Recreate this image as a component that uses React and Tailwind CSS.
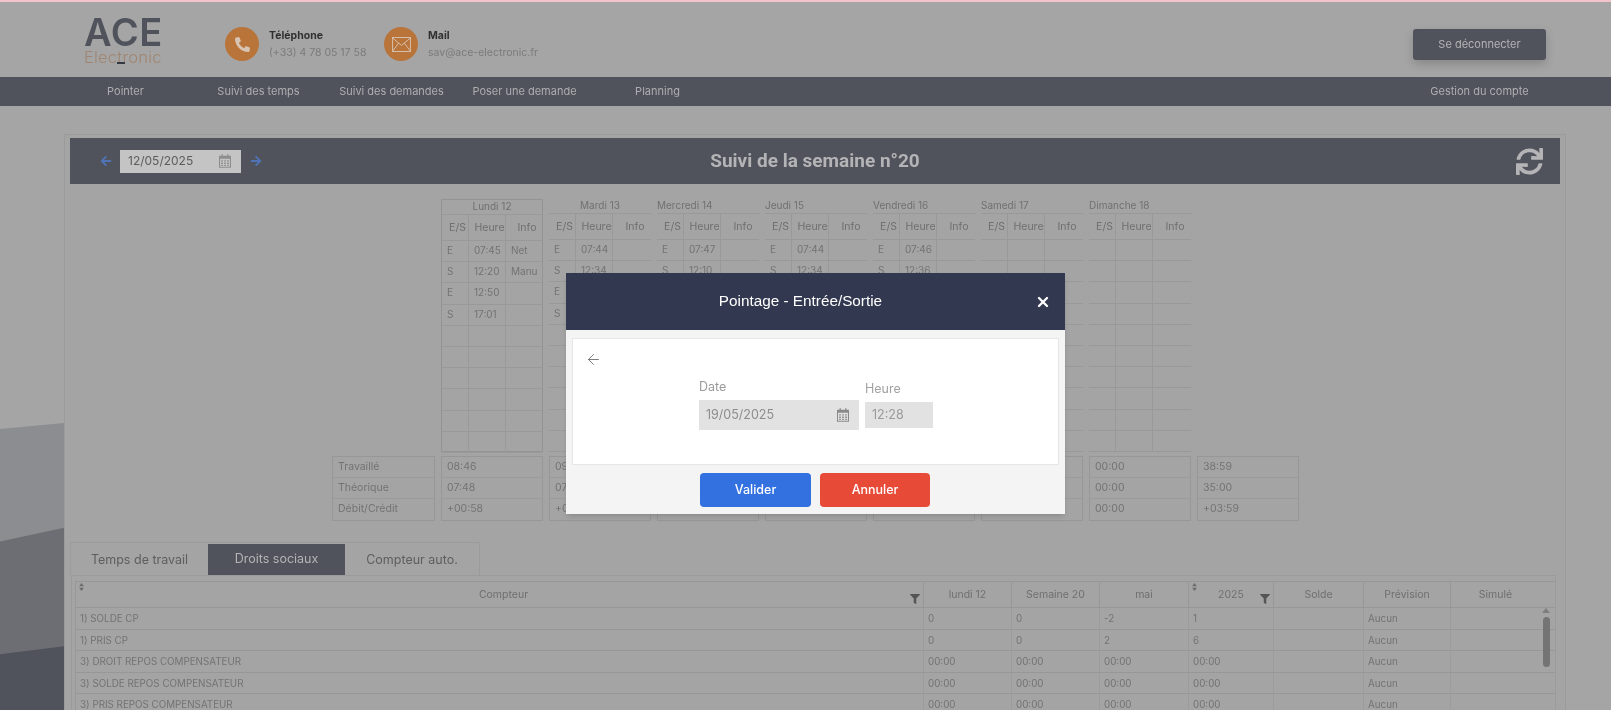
import React from "react";
import { ArrowLeft, X } from "lucide-react";
import { FaArrowLeft, FaArrowRight, FaFilter, FaPhoneAlt, FaSync } from "react-icons/fa";

const days = [
  {
    title: "Lundi 12",
    titleClass: "text-center",
    boxClass: "border border-[#949494]",
    rows: [["E", "07:45", "Net"], ["S", "12:20", "Manu"], ["E", "12:50", ""], ["S", "17:01", ""]],
    totals: ["08:46", "07:48", "+00:58"],
  },
  {
    title: "Mardi 13",
    titleClass: "text-center",
    rows: [["E", "07:44", ""], ["S", "12:34", ""], ["E", "", ""], ["S", "", ""]],
    totals: ["09:01", "07:48", "+01:13"],
  },
  {
    title: "Mercredi 14",
    rows: [["E", "07:47", ""], ["S", "12:10", ""]],
    totals: ["", "", ""],
  },
  {
    title: "Jeudi 15",
    rows: [["E", "07:44", ""], ["S", "12:34", ""]],
    totals: ["", "", ""],
  },
  {
    title: "Vendredi 16",
    rows: [["E", "07:46", ""], ["S", "12:36", ""]],
    totals: ["", "", ""],
  },
  { title: "Samedi 17", rows: [], totals: ["", "", ""] },
  { title: "Dimanche 18", rows: [], totals: ["00:00", "00:00", "00:00"] },
];

const counters = [
  ["1) SOLDE CP", "0", "0", "-2", "1", "", "Aucun", ""],
  ["1) PRIS CP", "0", "0", "2", "6", "", "Aucun", ""],
  ["3) DROIT REPOS COMPENSATEUR", "00:00", "00:00", "00:00", "00:00", "", "Aucun", ""],
  ["3) SOLDE REPOS COMPENSATEUR", "00:00", "00:00", "00:00", "00:00", "", "Aucun", ""],
  ["3) PRIS REPOS COMPENSATEUR", "00:00", "00:00", "00:00", "00:00", "", "Aucun", ""],
];

const CalendarIcon = ({ className }) => (
  <svg viewBox="0 0 14 16" className={className} fill="currentColor">
    <path d="M3 0h1.500v2h5V0H11v2h3v14H0V2h3zM1.200 5.500v9.300h11.600V5.500z" />
    <path d="M2.500 7h2v1.600h-2zM6 7h2v1.600H6zM9.500 7h2v1.600h-2zM2.500 9.800h2v1.600h-2zM6 9.800h2v1.600H6zM9.500 9.800h2v1.600h-2zM2.500 12.500h2v1.300h-2zM6 12.500h2v1.300H6zM9.500 12.500h2v1.300h-2z" />
  </svg>
);

const EnvelopeIcon = () => (
  <svg viewBox="0 0 20 16" className="w-[19px] h-[15px] text-[#d8c4b2]" fill="none" stroke="currentColor" strokeWidth="1">
    <rect x="0.500" y="0.500" width="19" height="15" />
    <path d="M0.500 1l9.500 8 9.500-8M0.500 15l6.500-8.500M19.500 15L13 6.500" />
  </svg>
);

const SortIcon = () => (
  <svg viewBox="0 0 6 10" className="w-[5px] h-[8px] text-[#6b6b6b]" fill="currentColor">
    <path d="M3 0l3 4H0zM3 10L0 6h6z" />
  </svg>
);

const DayTable = ({ day }) => {
  const rows = Array.from({ length: 10 }, (_, i) => day.rows[i] || ["", "", ""]);
  return (
    <div className={`h-[253px] ${day.boxClass || ""}`}>
      <div className={`h-[14px] leading-[13px] text-[10px] text-[#707070] whitespace-nowrap ${day.titleClass || ""}`}>
        {day.title}
      </div>
      <div className="grid grid-cols-[27px_37px_1fr] h-[27px] border-y border-[#999999] text-[10.500px] text-[#6f6f6f] items-center text-center">
        <span className="h-full pl-[5px] leading-[25px] border-r border-[#999999]">E/S</span>
        <span className="h-full pl-[5px] leading-[25px] border-r border-[#999999] overflow-hidden">Heure</span>
        <span className="pl-[6px]">Info</span>
      </div>
      {rows.map((row, i) => (
        <div key={i} className="grid grid-cols-[27px_37px_1fr] h-[21.200px] border-b border-[#999999] text-[10px] leading-[19px] text-[#737373]">
          <span className="pl-[5px] border-r border-[#999999]">{row[0]}</span>
          <span className="pl-[5px] border-r border-[#999999]">{row[1]}</span>
          <span className="pl-[5px]">{row[2]}</span>
        </div>
      ))}
    </div>
  );
};

const TotalBox = ({ values }) => (
  <div className="border border-[#979797] h-[65px]">
    {values.map((value, i) => (
      <div key={i} className="h-[21px] pl-[5px] text-[10.500px] leading-[20px] text-[#737373] border-b border-[#9b9b9b] last:border-b-0">
        {value}
      </div>
    ))}
  </div>
);

const PointageModal = () => (
  <div className="absolute left-[566px] top-[271px] w-[499px] h-[241px] bg-[#f4f4f4] shadow-md">
    <div className="h-[57px] bg-[#32384f] flex items-center justify-center relative pr-[30px]">
      <span className="text-[15.300px] text-white font-['Liberation_Sans',Arial,sans-serif]">Pointage - Entrée/Sortie</span>
      <X size={16} strokeWidth={3.5} className="absolute right-[14px] top-[21px] text-white" />
    </div>
    <div className="mx-[6px] mt-[8px] h-[127px] bg-white border border-[#e6e6e6] relative">
      <ArrowLeft size={17} strokeWidth={1.2} className="absolute left-[12px] top-[12px] text-[#666666]" />
      <div className="flex gap-[6px] pl-[126px] pt-[40px] items-end">
        <div>
          <div className="text-[12.500px] leading-[16px] text-[#9a9a9a] mb-[5px]">Date</div>
          <div className="w-[160px] h-[30px] bg-[#e2e2e2] flex items-center justify-between pl-[7px] pr-[10px] text-[12.500px] text-[#8d8d8d]">
            19/05/2025
            <CalendarIcon className="w-[12px] h-[14px] text-[#8a8a8a]" />
          </div>
        </div>
        <div className="pb-[2px]">
          <div className="text-[12.500px] leading-[16px] text-[#a3a3a3] mb-[5px]">Heure</div>
          <div className="w-[68px] h-[26px] bg-[#e2e2e2] leading-[26px] pl-[7px] text-[12.500px] text-[#9a9a9a]">12:28</div>
        </div>
      </div>
    </div>
    <div className="flex gap-[9px] pl-[134px] pt-[8px]">
      <button className="w-[111px] h-[34px] rounded-[4px] bg-[#3370e0] text-white text-[12.500px] font-medium">Valider</button>
      <button className="w-[110px] h-[34px] rounded-[4px] bg-[#e84a38] text-white text-[12.500px] font-medium">Annuler</button>
    </div>
  </div>
);

export default function App() {
  return (
    <div className="relative h-[710px] overflow-hidden bg-[#a5a5a5] font-['Inter','Noto_Sans',sans-serif] border-t-2 border-[#f3c4cc] blur-[0.5px]">
      {/* Vagues du fond, à gauche */}
      <svg viewBox="0 0 64 290" preserveAspectRatio="none" className="absolute left-0 top-[421px] w-[64px] h-[289px]">
        <path d="M0 6L64 0V290H0z" fill="#8c8d90" />
        <path d="M0 119L64 105V290H0z" fill="#6c6e73" />
        <path d="M0 232L64 224V290H0z" fill="#50535c" />
      </svg>

      {/* En-tête */}
      <header className="h-[75px] flex items-center pt-[9px] pl-[84px] pr-[65px]">
        <div className="w-[78px] relative -mt-[8px]">
          <div className="text-[38px] leading-[30px] font-semibold tracking-[0.5px] text-[#50535c]">ACE</div>
          <div className="mt-[3px] text-[16.500px] leading-[14px] font-light tracking-[0.2px] text-[#a08672] whitespace-nowrap">Electronic</div>
          <span className="absolute left-[33px] top-[45px] w-[8px] h-[2px] bg-[#333842]" />
        </div>
        <div className="ml-[63px] w-[34px] h-[34px] rounded-full bg-[#b9743a] flex items-center justify-center">
          <FaPhoneAlt size={15} className="text-[#d8c4b2]" />
        </div>
        <div className="ml-[10px] w-[115px] whitespace-nowrap">
          <div className="text-[10.500px] leading-[14px] font-bold text-[#303030]">Téléphone</div>
          <div className="mt-[3px] text-[10.500px] leading-[14px] text-[#7b7b7b]">(+33) 4 78 05 17 58</div>
        </div>
        <div className="w-[34px] h-[34px] rounded-full bg-[#b9743a] flex items-center justify-center">
          <EnvelopeIcon />
        </div>
        <div className="ml-[10px] whitespace-nowrap">
          <div className="text-[10.500px] leading-[14px] font-bold text-[#303030]">Mail</div>
          <div className="mt-[3px] text-[10.500px] leading-[14px] text-[#7b7b7b]">sav@ace-electronic.fr</div>
        </div>
        <button className="ml-auto w-[133px] h-[31px] rounded-[3px] bg-[#50535c] text-[11px] text-[#b4b4b6] shadow-[0_4px_10px_rgba(0,0,0,0.18)]">
          Se déconnecter
        </button>
      </header>

      {/* Navigation */}
      <nav className="h-[29px] bg-[#50535c] flex items-center pl-[59px] pr-[65px] text-[11px] text-[#aeaeb0]">
        {["Pointer", "Suivi des temps", "Suivi des demandes", "Poser une demande", "Planning"].map((item) => (
          <span key={item} className="w-[133px] text-center whitespace-nowrap">{item}</span>
        ))}
        <span className="ml-auto w-[133px] text-center whitespace-nowrap">Gestion du compte</span>
      </nav>

      {/* Panneau principal */}
      <main className="relative ml-[64px] mt-[28px] w-[1502px] h-[600px] border border-[#9b9b9b] bg-[#a4a4a4] px-[5px] pt-[3px]">
        <div className="h-[46px] w-[1490px] bg-[#50535c] flex items-center relative">
          <FaArrowLeft size={12} className="ml-[30px] text-[#4f73b5]" />
          <div className="ml-[8px] w-[121px] h-[23px] bg-[#c4c4c4] flex items-center justify-between pl-[8px] pr-[10px] text-[12px] text-[#5c5c5c]">
            12/05/2025
            <CalendarIcon className="w-[12px] h-[14px] text-[#8e8e8e]" />
          </div>
          <FaArrowRight size={12} className="ml-[9px] text-[#4f73b5]" />
          <h1 className="absolute left-0 right-0 text-center text-[19px] font-bold font-['Roboto',sans-serif] text-[#b4b4b6]">Suivi de la semaine n°20</h1>
          <FaSync size={27} className="ml-auto mr-[17px] text-[#b4b4b6]" />
        </div>

        {/* Semaine */}
        <div className="ml-[262px] mt-[15px] grid grid-cols-[103px_repeat(8,102px)] gap-x-[6px]">
          <div />
          {days.map((day) => (
            <DayTable key={day.title} day={day} />
          ))}
          <div />
          <div className="col-span-9 h-[4px]" />
          <TotalBox values={["Travaillé", "Théorique", "Débit/Crédit"]} />
          {days.map((day) => (
            <TotalBox key={day.title} values={day.totals} />
          ))}
          <TotalBox values={["38:59", "35:00", "+03:59"]} />
        </div>

        {/* Onglets */}
        <div className="mt-[21px] w-[410px] h-[33px] flex items-stretch border border-[#9b9b9b] border-b-0 text-[12.500px] text-[#5e5e5e] text-center">
          <div className="w-[137px] leading-[33px]">Temps de travail</div>
          <div className="w-[137px] mt-[1px] leading-[30px] bg-[#50535c] text-[#b4b4b6]">Droits sociaux</div>
          <div className="flex-1 leading-[33px]">Compteur auto.</div>
        </div>

        {/* Compteurs */}
        <div className="relative w-[1485px] ml-[1px] border border-[#9b9b9b] pl-[3px] pt-[5px]">
          <div className="grid grid-cols-[848px_88px_88px_89px_85px_90px_87px_89px] h-[27px] border-y border-l border-[#979797] text-[10.500px] leading-[25px] text-[#6f6f6f] text-center">
            <div className="relative pl-[8px] border-r border-[#979797]">
              <span className="absolute left-[3px] top-[1px] leading-none"><SortIcon /></span>
              Compteur
              <FaFilter size={10} className="absolute right-[3px] top-[12px] text-[#555555]" />
            </div>
            <div className="border-r border-[#979797]">lundi 12</div>
            <div className="border-r border-[#979797]">Semaine 20</div>
            <div className="border-r border-[#979797]">mai</div>
            <div className="relative border-r border-[#979797]">
              <span className="absolute left-[3px] top-[1px] leading-none"><SortIcon /></span>
              2025
              <FaFilter size={10} className="absolute right-[3px] top-[12px] text-[#555555]" />
            </div>
            <div className="border-r border-[#979797]">Solde</div>
            <div className="border-r border-[#979797]">Prévision</div>
            <div>Simulé</div>
          </div>
          {counters.map((row) => (
            <div key={row[0]} className="grid grid-cols-[848px_88px_88px_89px_85px_90px_87px_89px] h-[21.500px] border-b border-l border-[#979797] text-[9.800px] leading-[21px] text-[#737373]">
              {row.map((cell, i) => (
                <div key={i} className={`pl-[4px] whitespace-nowrap ${i < 7 ? "border-r border-[#9c9c9c]" : ""}`}>{cell}</div>
              ))}
            </div>
          ))}
          {/* Barre de défilement */}
          <div className="absolute right-[5px] top-[32px] w-[8px]">
            <svg viewBox="0 0 8 5" className="w-[8px] h-[5px] text-[#7d7d7d]" fill="currentColor"><path d="M4 0l4 5H0z" /></svg>
            <div className="mt-[4px] mx-auto w-[7px] h-[50px] rounded-full bg-[#747474]" />
          </div>
        </div>
      </main>

      <PointageModal />
    </div>
  );
}
